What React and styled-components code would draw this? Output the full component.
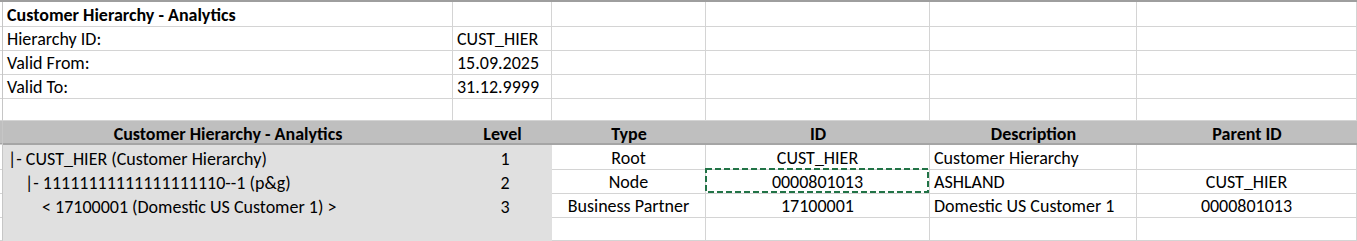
import React from 'react'
import styled, { createGlobalStyle } from 'styled-components'

const GlobalStyle = createGlobalStyle`
  html, body {
    margin: 0;
    padding: 0;
    background: #ffffff;
  }
  body {
    font-family: Calibri, Carlito, Lato, 'Liberation Sans', sans-serif;
    font-size: 18px;
    color: #000000;
  }
`

const COLS = '3px 450px 99px 154px 224px 207px 220px'

const Sheet = styled.div`
  width: 1357px;
  height: 241px;
  overflow: hidden;
  border-top: 2px solid #9e9e9e;
  box-sizing: border-box;
`

const Row = styled.div`
  display: grid;
  grid-template-columns: ${COLS};
  height: ${({ height }) => height || 24}px;
`

const Cell = styled.div`
  box-sizing: border-box;
  border-right: 1px solid #d4d4d4;
  border-bottom: 1px solid #d4d4d4;
  padding: 2px 4px 0;
  display: flex;
  align-items: center;
  justify-content: ${({ align }) => (align === 'center' ? 'center' : 'flex-start')};
  white-space: nowrap;
  font-weight: ${({ bold }) => (bold ? 700 : 400)};
  position: relative;
`

const Gutter = styled.div`
  box-sizing: border-box;
  border-right: 1px solid #c6c6c6;
  border-bottom: 1px solid #d4d4d4;
`

const HeaderRow = styled(Row)`
  background: #bfbfbf;
  border-bottom: 2px solid #a5a5a5;
  box-sizing: border-box;
`

const HeaderCell = styled.div`
  display: flex;
  align-items: center;
  justify-content: center;
  font-weight: 700;
  white-space: nowrap;
  padding-top: 2px;
`

const TreeCell = styled.div`
  background: #e0e0e0;
  display: flex;
  align-items: center;
  justify-content: ${({ align }) => (align === 'center' ? 'center' : 'flex-start')};
  padding-left: ${({ indent }) => 5 + (indent || 0)}px;
  padding-top: 2px;
  white-space: nowrap;
`

const Selection = styled.svg`
  position: absolute;
  left: -1px;
  top: -1px;
  width: calc(100% + 1px);
  height: calc(100% + 1px);
  pointer-events: none;
  overflow: visible;
`

const SelectionBox = () => (
  <Selection>
    <rect
      x="1"
      y="1"
      width="222"
      height="23"
      fill="none"
      stroke="#217346"
      strokeWidth="2"
      strokeDasharray="6 3"
    />
  </Selection>
)

const info = [
  { label: 'Customer Hierarchy - Analytics', value: '', bold: true },
  { label: 'Hierarchy ID:', value: 'CUST_HIER' },
  { label: 'Valid From:', value: '15.09.2025' },
  { label: 'Valid To:', value: '31.12.9999' },
]

const rows = [
  {
    name: '|- CUST_HIER (Customer Hierarchy)',
    indent: 0,
    level: '1',
    type: 'Root',
    id: 'CUST_HIER',
    desc: 'Customer Hierarchy',
    parent: '',
  },
  {
    name: '|- 11111111111111111110--1 (p&g)',
    indent: 17,
    level: '2',
    type: 'Node',
    id: '0000801013',
    desc: 'ASHLAND',
    parent: 'CUST_HIER',
    selected: true,
  },
  {
    name: '< 17100001 (Domestic US Customer 1) >',
    indent: 34,
    level: '3',
    type: 'Business Partner',
    id: '17100001',
    desc: 'Domestic US Customer 1',
    parent: '0000801013',
  },
  { name: '', level: '', type: '', id: '', desc: '', parent: '' },
]

const EmptyCells = ({ count }) =>
  Array.from({ length: count }).map((_, i) => <Cell key={i} />)

export default function App() {
  return (
    <>
      <GlobalStyle />
      <Sheet>
        {info.map((r, i) => (
          <Row key={i}>
            <Gutter />
            <Cell bold={r.bold}>{r.label}</Cell>
            <Cell>{r.value}</Cell>
            <EmptyCells count={4} />
          </Row>
        ))}
        <Row height={23}>
          <Gutter />
          <EmptyCells count={6} />
        </Row>

        <HeaderRow>
          <Gutter />
          <HeaderCell>Customer Hierarchy - Analytics</HeaderCell>
          <HeaderCell>Level</HeaderCell>
          <HeaderCell>Type</HeaderCell>
          <HeaderCell>ID</HeaderCell>
          <HeaderCell>Description</HeaderCell>
          <HeaderCell>Parent ID</HeaderCell>
        </HeaderRow>

        {rows.map((r, i) => (
          <Row key={i}>
            <Gutter />
            <TreeCell indent={r.indent}>{r.name}</TreeCell>
            <TreeCell align="center">{r.level}</TreeCell>
            <Cell align="center">{r.type}</Cell>
            <Cell align="center">
              {r.id}
              {r.selected && <SelectionBox />}
            </Cell>
            <Cell>{r.desc}</Cell>
            <Cell align="center">{r.parent}</Cell>
          </Row>
        ))}
      </Sheet>
    </>
  )
}
